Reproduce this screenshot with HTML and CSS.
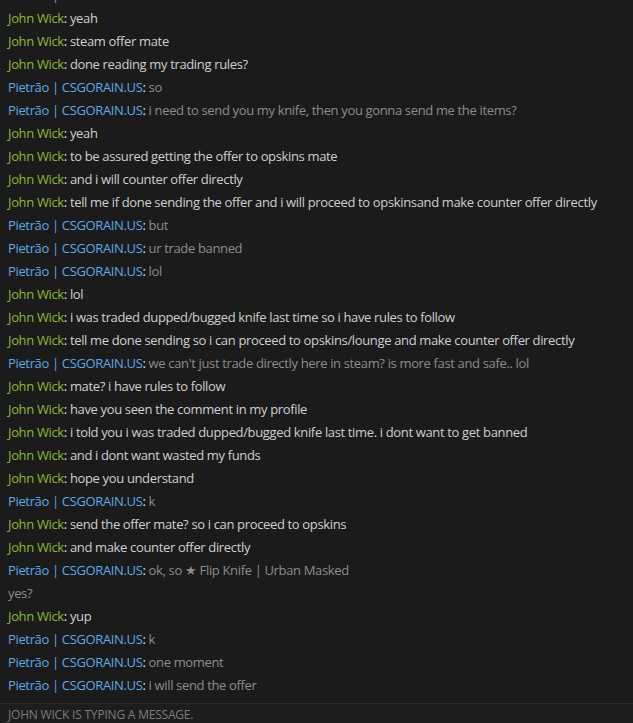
FILE: index.html
```html
<!DOCTYPE html>
<html lang="en">
<head>
    <meta charset="UTF-8">
    <meta name="viewport" content="width=device-width, initial-scale=1.0">
    <title>Trade Chat</title>
    <link rel="stylesheet" href="styles.css">
</head>
<body>
<div class="chat">
    <div class="log">
        <p class="msg them"><span class="name">Pietrão | CSGORAIN.US</span>: <span class="text">hello</span></p>
        <p class="msg me"><span class="name">John Wick</span>: <span class="text">yeah</span></p>
        <p class="msg me"><span class="name">John Wick</span>: <span class="text">steam offer mate</span></p>
        <p class="msg me"><span class="name">John Wick</span>: <span class="text">done reading my trading rules?</span></p>
        <p class="msg them"><span class="name">Pietrão | CSGORAIN.US</span>: <span class="text">so</span></p>
        <p class="msg them"><span class="name">Pietrão | CSGORAIN.US</span>: <span class="text">i need to send you my knife, then you gonna send me the items?</span></p>
        <p class="msg me"><span class="name">John Wick</span>: <span class="text">yeah</span></p>
        <p class="msg me"><span class="name">John Wick</span>: <span class="text">to be assured getting the offer to opskins mate</span></p>
        <p class="msg me"><span class="name">John Wick</span>: <span class="text">and i will counter offer directly</span></p>
        <p class="msg me"><span class="name">John Wick</span>: <span class="text">tell me if done sending the offer and i will proceed to opskinsand make counter offer directly</span></p>
        <p class="msg them"><span class="name">Pietrão | CSGORAIN.US</span>: <span class="text">but</span></p>
        <p class="msg them"><span class="name">Pietrão | CSGORAIN.US</span>: <span class="text">ur trade banned</span></p>
        <p class="msg them"><span class="name">Pietrão | CSGORAIN.US</span>: <span class="text">lol</span></p>
        <p class="msg me"><span class="name">John Wick</span>: <span class="text">lol</span></p>
        <p class="msg me"><span class="name">John Wick</span>: <span class="text">i was traded dupped/bugged knife last time so i have rules to follow</span></p>
        <p class="msg me"><span class="name">John Wick</span>: <span class="text">tell me done sending so i can proceed to opskins/lounge and make counter offer directly</span></p>
        <p class="msg them"><span class="name">Pietrão | CSGORAIN.US</span>: <span class="text">we can't just trade directly here in steam? is more fast and safe.. lol</span></p>
        <p class="msg me"><span class="name">John Wick</span>: <span class="text">mate? i have rules to follow</span></p>
        <p class="msg me"><span class="name">John Wick</span>: <span class="text">have you seen the comment in my profile</span></p>
        <p class="msg me"><span class="name">John Wick</span>: <span class="text">i told you i was traded dupped/bugged knife last time. i dont want to get banned</span></p>
        <p class="msg me"><span class="name">John Wick</span>: <span class="text">and i dont want wasted my funds</span></p>
        <p class="msg me"><span class="name">John Wick</span>: <span class="text">hope you understand</span></p>
        <p class="msg them"><span class="name">Pietrão | CSGORAIN.US</span>: <span class="text">k</span></p>
        <p class="msg me"><span class="name">John Wick</span>: <span class="text">send the offer mate? so i can proceed to opskins</span></p>
        <p class="msg me"><span class="name">John Wick</span>: <span class="text">and make counter offer directly</span></p>
        <p class="msg them"><span class="name">Pietrão | CSGORAIN.US</span>: <span class="text">ok, so ★ Flip Knife | Urban Masked</span></p>
        <p class="msg them"><span class="text">yes?</span></p>
        <p class="msg me"><span class="name">John Wick</span>: <span class="text">yup</span></p>
        <p class="msg them"><span class="name">Pietrão | CSGORAIN.US</span>: <span class="text">k</span></p>
        <p class="msg them"><span class="name">Pietrão | CSGORAIN.US</span>: <span class="text">one moment</span></p>
        <p class="msg them"><span class="name">Pietrão | CSGORAIN.US</span>: <span class="text">i will send the offer</span></p>
    </div>
    <div class="typing">John Wick is typing a message.</div>
</div>
</body>
</html>
```

FILE: styles.css
```css
/* chat window */
body {
    font-family: "Open Sans", "Noto Sans", sans-serif;
    background-color: #1b1b1b;
    margin: 0;
}
.chat {
    height: 723px;
    display: flex;
    flex-direction: column;
}
.log {
    height: 703px;
    overflow: hidden;
    display: flex;
    flex-direction: column;
    justify-content: flex-end;
    padding: 0 8px 6px 8px;
    box-sizing: border-box;
}
.msg {
    margin: 0;
    font-size: 13px;
    letter-spacing: -0.35px;
    line-height: 23px;
    white-space: nowrap;
    color: #e0e0e0;
    flex-shrink: 0;
}
.me .name {
    color: #8fba2c;
}
.me .text {
    color: #cfcfcf;
}
.them .name {
    color: #5ea8e8;
}
.them .text {
    color: #8c8c8c;
}
.typing {
    flex: 1;
    border-top: 1px solid #2b2b2b;
    background-color: #1d1d1d;
    color: #7c7c7c;
    font-size: 12px;
    letter-spacing: -0.2px;
    text-transform: uppercase;
    padding: 3px 8px 0 8px;
    line-height: 16px;
}
```
